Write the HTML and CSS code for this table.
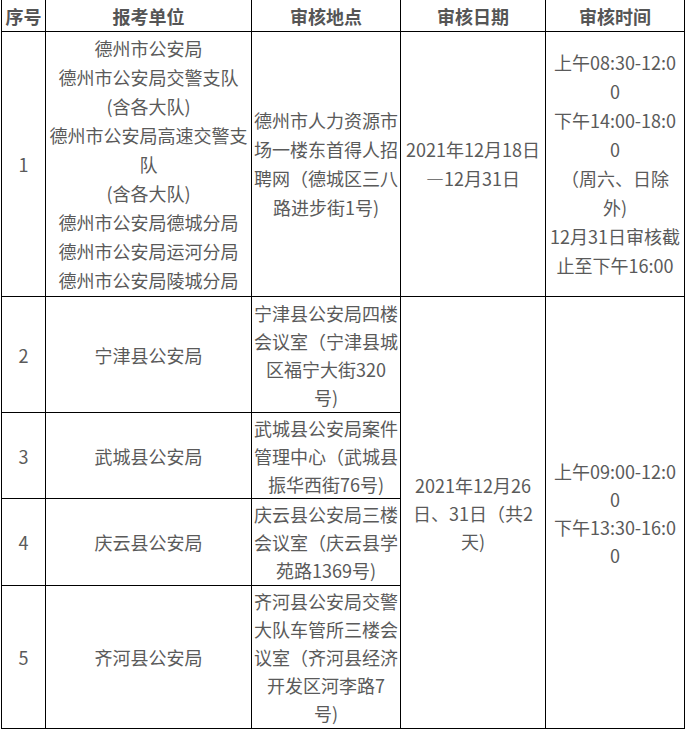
FILE: index.html
```html
<!DOCTYPE html>
<html lang="zh-CN">
<head>
<meta charset="utf-8">
<title>审核安排</title>
<link rel="stylesheet" href="styles.css">
</head>
<body>
<table class="grid">
  <colgroup>
    <col class="c-no">
    <col class="c-unit">
    <col class="c-place">
    <col class="c-date">
    <col class="c-time">
  </colgroup>
  <thead>
    <tr class="r-head">
      <th>序号</th>
      <th>报考单位</th>
      <th>审核地点</th>
      <th>审核日期</th>
      <th>审核时间</th>
    </tr>
  </thead>
  <tbody>
    <tr class="r1">
      <td>1</td>
      <td class="tall">德州市公安局<br>德州市公安局交警支队<br>(含各大队)<br>德州市公安局高速交警支<br>队<br>(含各大队)<br>德州市公安局德城分局<br>德州市公安局运河分局<br>德州市公安局陵城分局</td>
      <td class="tall">德州市人力资源市<br>场一楼东首得人招<br>聘网（德城区三八<br>路进步街1号)</td>
      <td class="tall">2021年12月18日<br>—12月31日</td>
      <td class="tall">上午08:30-12:0<br>0<br>下午14:00-18:0<br>0<br>（周六、日除<br>外)<br>12月31日审核截<br>止至下午16:00</td>
    </tr>
    <tr class="r2">
      <td>2</td>
      <td>宁津县公安局</td>
      <td>宁津县公安局四楼<br>会议室（宁津县城<br>区福宁大街320<br>号)</td>
      <td rowspan="4">2021年12月26<br>日、31日（共2<br>天)</td>
      <td rowspan="4">上午09:00-12:0<br>0<br>下午13:30-16:0<br>0</td>
    </tr>
    <tr class="r3">
      <td>3</td>
      <td>武城县公安局</td>
      <td>武城县公安局案件<br>管理中心（武城县<br>振华西街76号)</td>
    </tr>
    <tr class="r4">
      <td>4</td>
      <td>庆云县公安局</td>
      <td>庆云县公安局三楼<br>会议室（庆云县学<br>苑路1369号)</td>
    </tr>
    <tr class="r5">
      <td>5</td>
      <td>齐河县公安局</td>
      <td>齐河县公安局交警<br>大队车管所三楼会<br>议室（齐河县经济<br>开发区河李路7<br>号)</td>
    </tr>
  </tbody>
</table>
</body>
</html>
```

FILE: styles.css
```css
html, body {
  margin: 0;
  padding: 0;
  background: #ffffff;
}

.grid {
  border-collapse: collapse;
  table-layout: fixed;
  width: 683px;
  margin-left: 1px;
  font-family: "Noto Sans CJK SC", "Microsoft YaHei", sans-serif;
  font-size: 18px;
  color: #5a5a5a;
}

.c-no { width: 44px; }
.c-unit { width: 206px; }
.c-place { width: 149px; }
.c-date { width: 145px; }
.c-time { width: 139px; }

.grid th,
.grid td {
  border: 1px solid #000000;
  padding: 0 2px;
  text-align: center;
  vertical-align: middle;
  line-height: 28px;
  white-space: nowrap;
  overflow: hidden;
}

.grid th {
  border-top: none;
  font-weight: bold;
  height: 31px;
  color: #555555;
}

.grid td.tall {
  line-height: 29px;
}

.r1 td { height: 264px; }
.r2 td { height: 115px; }
.r3 td { height: 85px; }
.r4 td { height: 86px; }
.r5 td { height: 142px; }
```
